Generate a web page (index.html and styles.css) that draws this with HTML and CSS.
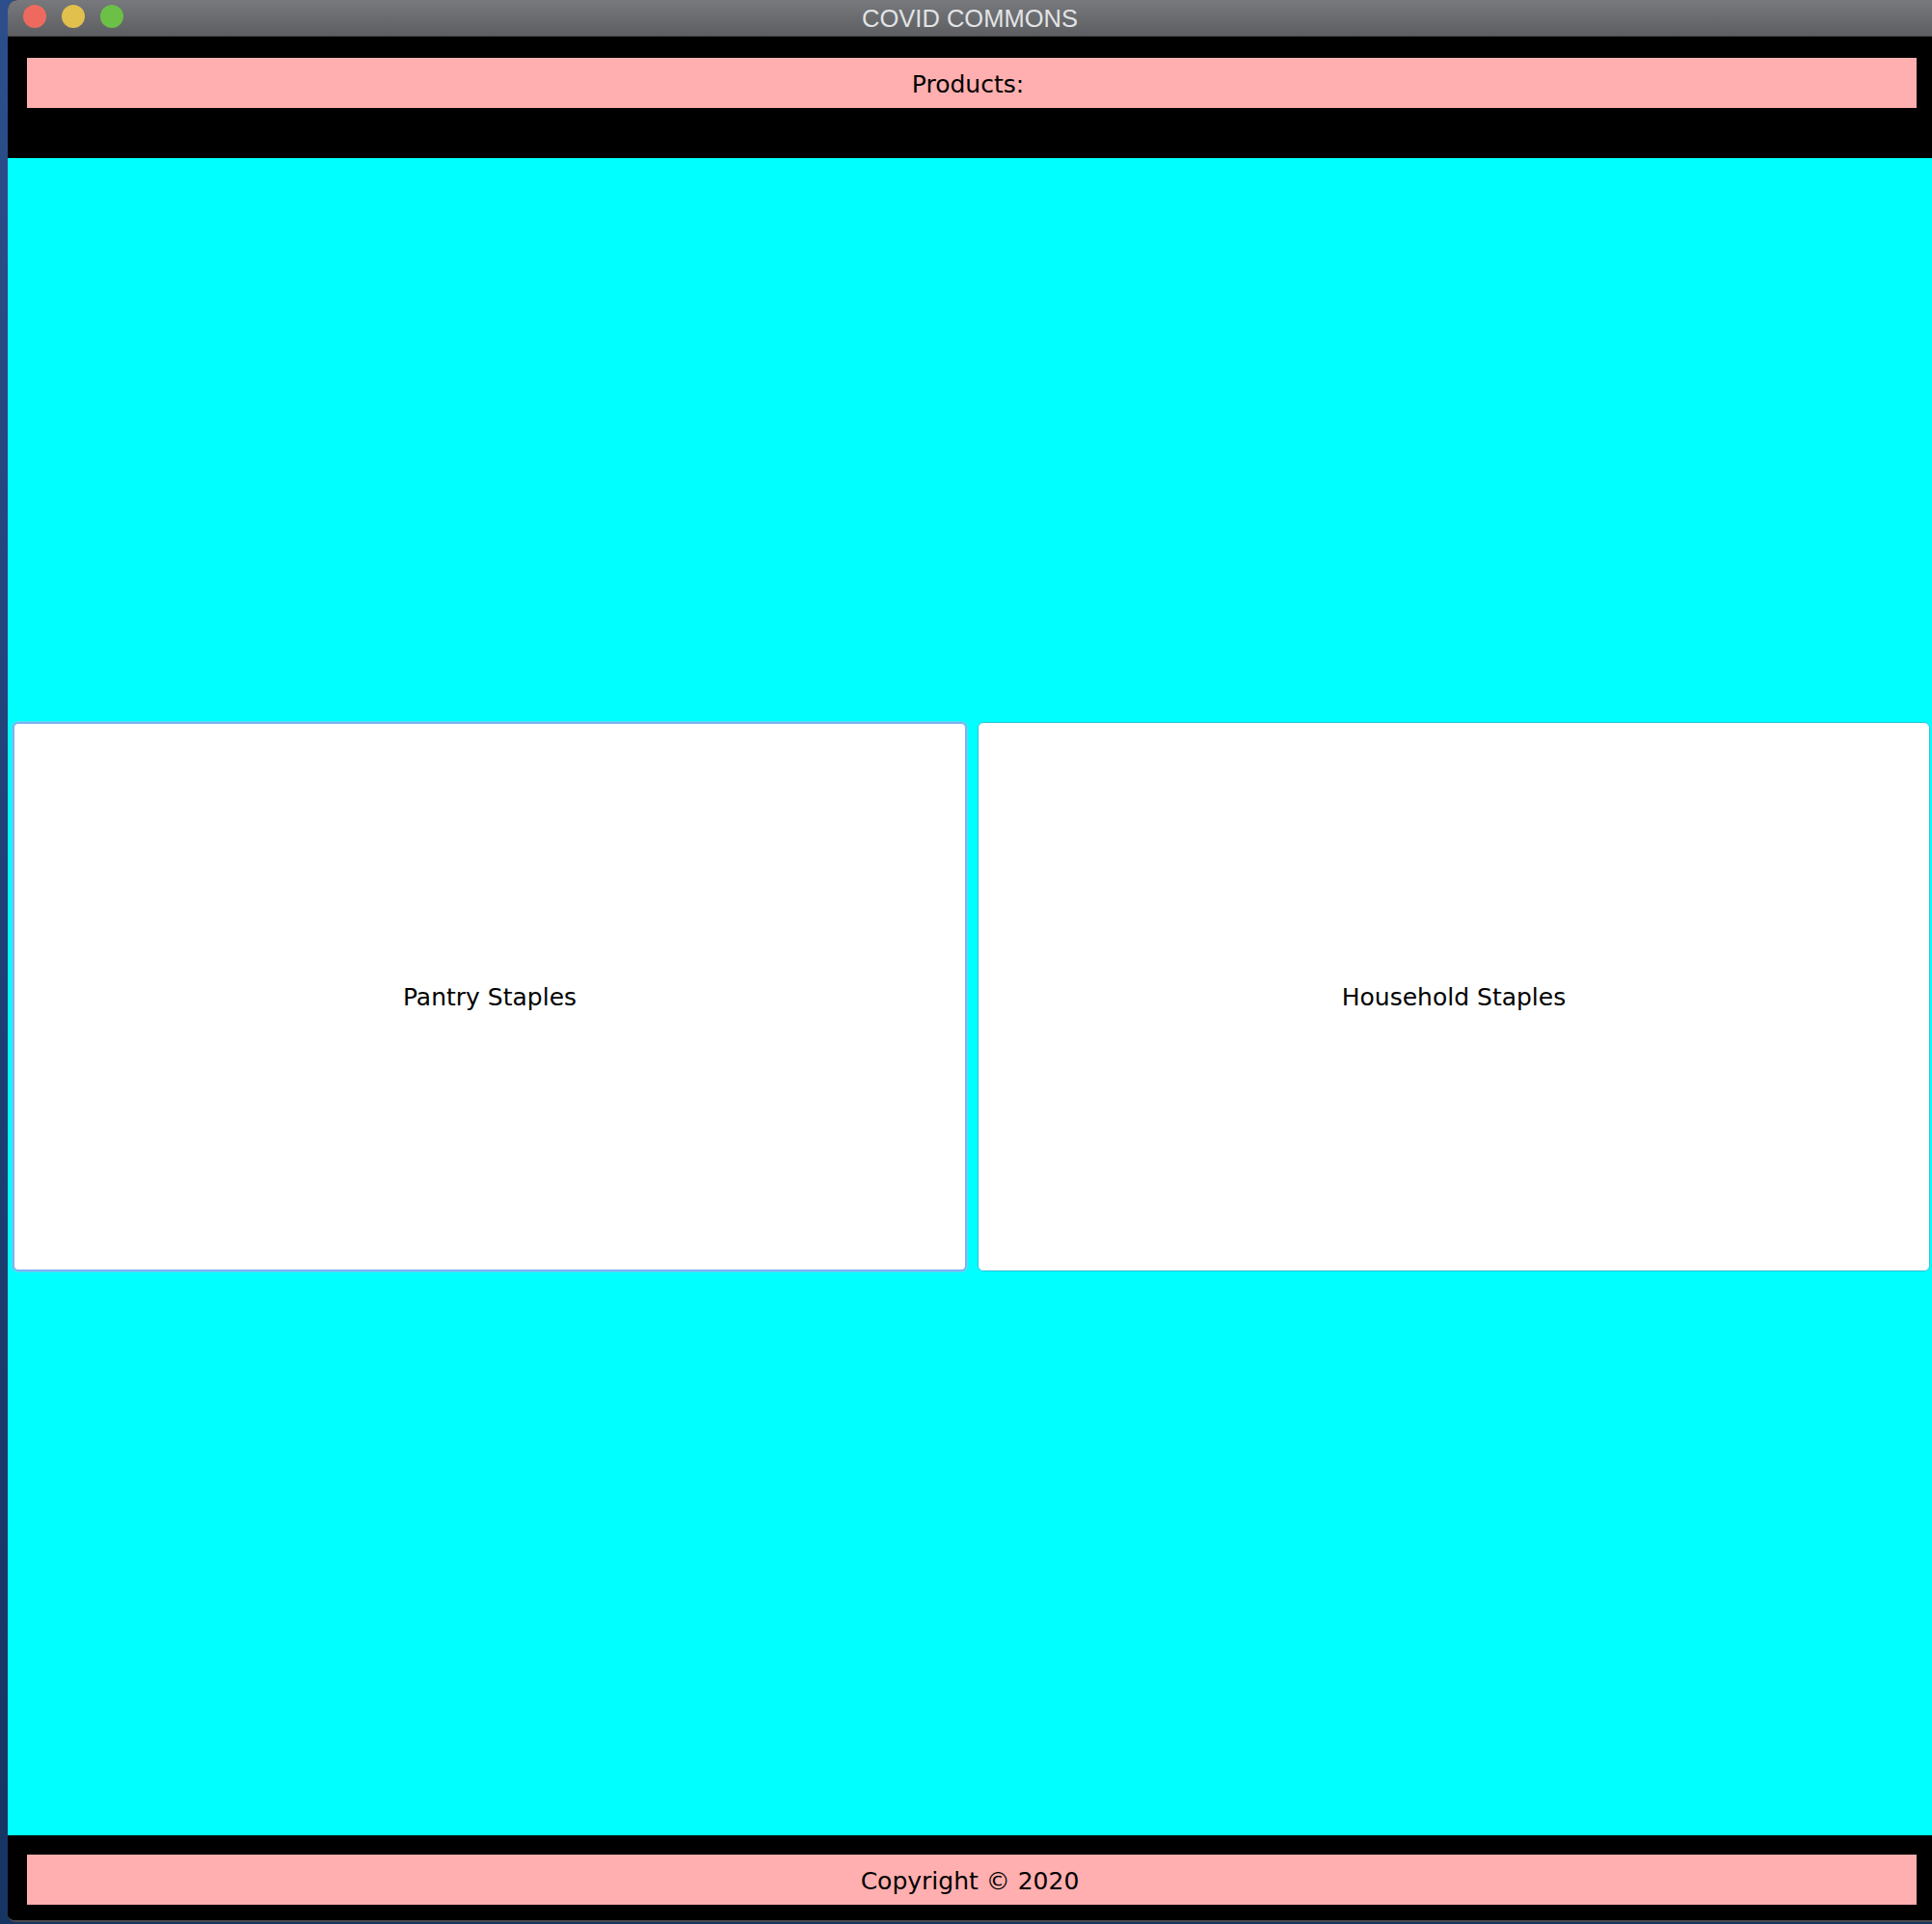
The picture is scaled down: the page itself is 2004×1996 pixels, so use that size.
FILE: index.html
```html
<!DOCTYPE html>
<html>
<head>
<meta charset="utf-8">
<link rel="stylesheet" href="styles.css">
</head>
<body>
<div class="window">
  <div class="titlebar">
    <div class="lights">
      <span class="light red"></span>
      <span class="light yellow"></span>
      <span class="light green"></span>
    </div>
    <div class="title">COVID COMMONS</div>
  </div>
  <div class="header">
    <div class="bar"><span class="bar-label">Products:</span></div>
  </div>
  <div class="main">
    <div class="card focused">Pantry Staples</div>
    <div class="card">Household Staples</div>
  </div>
  <div class="footer">
    <div class="bar"><span class="bar-label">Copyright © 2020</span></div>
  </div>
</div>
</body>
</html>
```
FILE: styles.css
```css
html, body {
  margin: 0;
  padding: 0;
}
body {
  width: 2004px;
  height: 1996px;
  background: linear-gradient(180deg, #2c4f8c 0%, #1f3f75 50%, #173562 100%);
  overflow: hidden;
}
.window {
  margin-left: 8px;
  width: 1996px;
  height: 1992px;
  display: flex;
  flex-direction: column;
  background: #000;
  border-radius: 10px 0 0 8px;
  overflow: hidden;
  border-bottom: 2px solid #4a4a4c;
}
.titlebar {
  position: relative;
  height: 37px;
  flex: 0 0 37px;
  border-bottom: 1px solid #48494c;
  background: linear-gradient(180deg, #77797d 0%, #5c5e62 100%);
  display: flex;
  align-items: center;
  justify-content: center;
}
.lights {
  position: absolute;
  left: 16px;
  top: 5px;
  display: flex;
  gap: 16px;
}
.light {
  width: 24px;
  height: 24px;
  border-radius: 50%;
  display: block;
}
.red { background: #ef6a5e; }
.yellow { background: #e2c04d; }
.green { background: #6cbf47; }
.title {
  font-family: "Liberation Sans", Arial, sans-serif;
  font-size: 25.5px;
  color: #e2e3e5;
  line-height: 1;
  padding-top: 3px;
}
.header {
  flex: 0 0 126px;
  background: #000;
  padding: 22px 16px 0 20px;
  box-sizing: border-box;
}
.footer {
  flex: 0 0 88px;
  background: #000;
  padding: 20px 16px 0 20px;
  box-sizing: border-box;
}
.bar {
  height: 52px;
  background: #ffafaf;
  display: flex;
  align-items: center;
  justify-content: center;
}
.bar-label {
  font-family: "DejaVu Sans", "Lucida Grande", sans-serif;
  font-size: 25px;
  color: #000;
  margin-right: 8px;
  padding-top: 2px;
}
.footer .bar-label {
  margin-right: 4px;
}
.main {
  flex: 1;
  background: #00ffff;
  display: flex;
  align-items: center;
  gap: 11px;
  padding: 0 2px 0 5px;
}
.card {
  flex: 1;
  height: 570px;
  box-sizing: border-box;
  background: #fff;
  border: 1px solid #2bc4d8;
  border-radius: 6px;
  display: flex;
  align-items: center;
  justify-content: center;
  font-family: "DejaVu Sans", "Lucida Grande", sans-serif;
  font-size: 25px;
  color: #000;
}
.card.focused {
  border: 2px solid #7ab4f0;
  box-shadow: 0 0 0 1px #5fd8f8;
}
```
